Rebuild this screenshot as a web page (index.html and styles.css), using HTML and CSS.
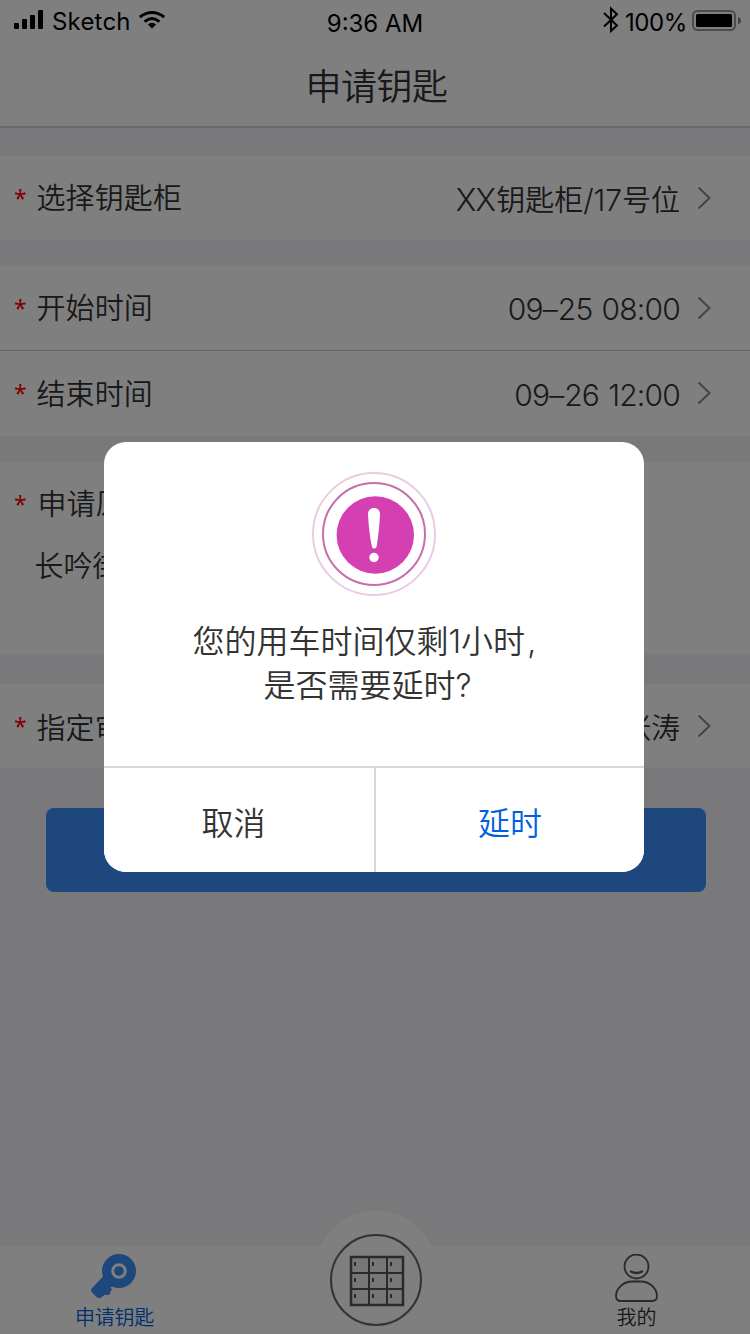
FILE: index.html
```html
<!DOCTYPE html>
<html lang="zh-CN">
<head>
<meta charset="utf-8">
<title>申请钥匙</title>
<link rel="stylesheet" href="styles.css">
</head>
<body>
<div class="screen">
  <header class="header">
    <div class="status">
      <div class="status-left">
        <svg class="signal" width="30" height="20" viewBox="0 0 30 20"><rect x="0" y="13" width="5" height="6" rx="1"/><rect x="8" y="9" width="5" height="10" rx="1"/><rect x="16" y="5" width="5" height="14" rx="1"/><rect x="24" y="0" width="5" height="19" rx="1"/></svg>
        <span class="carrier">Sketch</span>
        <svg class="wifi" width="26" height="18" viewBox="0 0 26 18"><path d="M.8 6Q13-3 25.200 6M5.600 10.600Q13 4.200 20.400 10.600" fill="none" stroke="#000" stroke-width="2.9"/><path d="M8.800 13.400Q13 10.200 17.200 13.400L13 17.600Z"/></svg>
      </div>
      <span class="clock">9:36 AM</span>
      <div class="status-right">
        <svg class="bluetooth" width="16" height="28" viewBox="0 0 16 28"><path d="M1 7L14 19.5L8 25V2.500L14 8.2L1 20.5" fill="none" stroke="#000" stroke-width="2"/></svg>
        <span class="percent">100%</span>
        <svg class="battery" width="50" height="22" viewBox="0 0 50 22"><rect x="1" y="1" width="42" height="19" rx="4.5" fill="none" stroke="#999" stroke-width="2"/><rect x="4" y="4" width="36" height="13" rx="1.5"/><path d="M46 7Q49 8 49 10.8T46 14.5Z" fill="#888"/></svg>
      </div>
    </div>
    <h1 class="title">申请钥匙</h1>
  </header>

  <main class="content">
    <section class="group group-cabinet">
      <div class="row"><span class="star">*</span><span class="label">选择钥匙柜</span><span class="value value-cabinet"><span class="xx">XX</span>钥匙柜<span class="slot">/17</span>号位</span><svg class="chevron" width="14" height="24" viewBox="0 0 14 24"><path d="M1.5 1.5L12.5 12L1.5 22.5"/></svg></div>
    </section>
    <section class="group group-time">
      <div class="row row-line"><span class="star">*</span><span class="label">开始时间</span><span class="value value-time">09<span class="dash">–</span>25&nbsp;<span class="time">08:00</span></span><svg class="chevron" width="14" height="24" viewBox="0 0 14 24"><path d="M1.5 1.5L12.5 12L1.5 22.5"/></svg></div>
      <div class="row"><span class="star">*</span><span class="label">结束时间</span><span class="value value-time">09<span class="dash">–</span>26&nbsp;<span class="time">12:00</span></span><svg class="chevron" width="14" height="24" viewBox="0 0 14 24"><path d="M1.5 1.5L12.5 12L1.5 22.5"/></svg></div>
    </section>
    <section class="group group-reason">
      <div class="row"><span class="star">*</span><span class="label label-reason">申请原因</span></div>
      <p class="reason">长吟街</p>
    </section>
    <section class="group group-approver">
      <div class="row"><span class="star">*</span><span class="label label-approver">指定审批人</span><span class="value value-name">张涛</span><svg class="chevron" width="14" height="24" viewBox="0 0 14 24"><path d="M1.5 1.5L12.5 12L1.5 22.5"/></svg></div>
    </section>
    <button class="submit" type="button"></button>
  </main>

  <nav class="tabs">
    <div class="tab tab-apply">
      <svg class="key" width="46" height="46" viewBox="0 0 46 46"><g fill="#3c8efa"><circle cx="28" cy="17" r="17"/><path d="M12.500 22L2 33Q-1.500 36 1.500 39L5.500 43Q8.500 45.500 11.500 42.500L14 40.500Q19.500 42.500 19.500 37.500Q22 36 19.500 33.500L25 30Z"/></g><circle cx="28" cy="17" r="6.300" fill="none" stroke="#fff" stroke-width="3"/></svg>
      <span>申请钥匙</span>
    </div>
    <div class="tab tab-cabinet">
      <svg class="cabinet" width="124" height="124" viewBox="0 0 124 124">
        <path d="M6 36A62 62 0 0 1 118 36V124H6Z" fill="#fff"/><path d="M6 36A62 62 0 0 1 118 36" fill="none" stroke="#f5f5f5"/>
        <circle cx="62" cy="70" r="45" fill="none" stroke="#666" stroke-width="2"/>
        <rect x="37" y="47" width="52" height="48" fill="#eee" stroke="#555" stroke-width="2.500"/>
        <path d="M55 47V95M73 47V95M37 63H89M37 79H89" stroke="#555" stroke-width="2"/>
        <path d="M41 52V56M59 52V56M77 52V56M41 68V72M59 68V72M77 68V72M41 84V88M59 84V88M77 84V88" stroke="#555" stroke-width="2"/>
      </svg>
    </div>
    <div class="tab tab-mine">
      <svg width="44" height="50" viewBox="0 0 44 50" fill="none" stroke="#555" stroke-width="1.800"><circle cx="21.500" cy="12.500" r="12"/><path d="M16 17.500Q21.500 20.500 27 17.500" stroke-width="2.500" stroke-linecap="round"/><path d="M17 27.500H26C34 27.500 42 34 42 42Q42 47 37 47H6Q1 47 1 42C1 34 9 27.500 17 27.500Z"/></svg>
      <span>我的</span>
    </div>
  </nav>

  <div class="overlay">
    <div class="dialog">
      <div class="dialog-body">
        <svg class="alert" width="124" height="124" viewBox="0 0 124 124"><circle cx="62" cy="62" r="61" fill="none" stroke="#ebcae3" stroke-width="2"/><circle cx="62" cy="62" r="51" fill="none" stroke="#c66caf" stroke-width="2"/><circle cx="63.300" cy="63" r="38.700" fill="#d43fb2"/><path d="M56 42C56 34 68 34 68 42Q67 62 64.500 75Q62 78 60 75Q57 62 56 42Z" fill="#fff"/><circle cx="62" cy="85.500" r="4.700" fill="#fff"/></svg>
        <p class="message"><span class="line line-one">您的用车时间仅剩<span class="digit">1</span>小时<span class="comma">,</span></span><span class="line line-two">是否需要延时<span class="mark">?</span></span></p>
      </div>
      <div class="actions"><button class="action cancel" type="button">取消</button><button class="action extend" type="button">延时</button></div>
    </div>
  </div>
</div>
</body>
</html>
```
FILE: styles.css
```css
* { box-sizing: border-box; }
body { margin: 0; font-family: Inter, "Noto Sans CJK SC", sans-serif; font-weight: 350; color: #333; }
p, h1 { margin: 0; font-weight: 350; }
button { border: 0; padding: 0; font: inherit; }
svg { display: block; flex: none; }
.screen { position: relative; display: flex; flex-direction: column; width: 750px; height: 1334px; overflow: hidden; background: #f3f3f7; }
.header { height: 128px; background: #fff; border-bottom: 2px solid #d4d4d4; }
.status { display: grid; grid-template-columns: 1fr 1fr 1fr; height: 44px; color: #000; font-size: 24px; font-weight: 400; line-height: 30px; }
.status-left { display: flex; padding-left: 14px; }
.signal { margin-top: 10px; }
.carrier { width: 86px; margin: 7px 0 0 8px; letter-spacing: .2px; }
.wifi { margin: 11px 0 0 1px; }
.clock { padding-top: 9px; text-align: center; }
.status-right { display: flex; justify-content: flex-end; padding-right: 8px; }
.bluetooth { margin: 6px 6px 0 0; }
.percent { padding-top: 8px; letter-spacing: -.4px; margin-right: 5px; }
.battery { margin-top: 10px; }
.title { height: 82px; padding: 17px 0 0 3px; font-size: 36px; line-height: 52px; letter-spacing: -.5px; text-align: center; }
.content { flex: 1; display: flex; flex-direction: column; padding-top: 28px; }
.group { background: #fff; }
.group-cabinet, .group-time { margin-bottom: 26px; }
.row { display: flex; align-items: center; height: 84px; padding: 0 39px 0 14px; font-size: 29px; line-height: 44px; }
.row-line { height: 85px; border-bottom: 1px solid #ccc; }
.group-time .row:last-child { height: 85px; }
.star { width: 22.5px; margin-top: -1px; color: #f00; font-size: 23px; font-family: "Noto Sans", sans-serif; font-weight: 400; }
.label { padding-top: 2px; letter-spacing: .1px; }
.label-reason { padding-left: 1px; }
.label-approver { padding-top: 5px; }
.value { margin: 4px 17px 0 auto; }
.xx { margin-right: 1px; font-size: 31px; letter-spacing: -.8px; }
.slot { font-size: 30px; letter-spacing: -.1px; }
.value-time { margin-top: 2px; font-size: 30px; letter-spacing: -.8px; }
.dash { letter-spacing: 0; }
.time { margin-left: 1.5px; }
.value-name { margin-top: 5px; }
.chevron { margin-top: -1px; }
.chevron path { fill: none; stroke: #888; stroke-width: 2; }
.group-reason { height: 192px; margin-bottom: 30px; }
.reason { padding-left: 34.5px; margin-top: -1px; font-size: 29px; line-height: 44px; }
.submit { align-self: flex-start; width: 660px; height: 84px; margin: 40px 0 0 46px; border-radius: 8px; background: #3c8efa; }
.tabs { display: flex; justify-content: space-between; flex: none; height: 88px; background: #fff; }
.tab { display: flex; flex-direction: column; align-items: center; width: 229px; padding-top: 8px; font-size: 20px; line-height: 28px; }
.tab span { margin-top: 4px; }
.tab-apply { color: #0061dd; letter-spacing: -.2px; }
.key { margin-right: 2px; }
.tab-cabinet { padding: 0; width: 124px; }
.cabinet { margin-top: -36px; }
.tabs .tab-mine { width: 227px; }
.tab-mine span { margin-top: 0; }
.overlay { position: absolute; inset: 0; display: flex; align-items: flex-start; justify-content: center; padding: 442px 2px 0 0; background: rgba(0,0,0,.5); }
.dialog { width: 540px; height: 430px; border-radius: 22px; background: #fff; overflow: hidden; }
.dialog-body { height: 324px; padding-top: 30px; display: flex; flex-direction: column; align-items: center; }
.message { display: flex; flex-direction: column; align-self: stretch; margin-top: 24px; font-size: 32px; line-height: 44px; }
.line-one { padding-left: 88.5px; }
.line-two { padding-left: 159.5px; }
.digit { letter-spacing: 0; }
.comma { padding-left: 2px; }
.actions { display: grid; grid-template-columns: 272px 268px; height: 106px; border-top: 2px solid #d8d8d8; }
.action { background: #fff; color: #333; font-size: 32px; padding-top: 2px; }
.cancel { border-right: 2px solid #d8d8d8; padding-right: 11px; }
.extend { color: #0061e0; }
```
